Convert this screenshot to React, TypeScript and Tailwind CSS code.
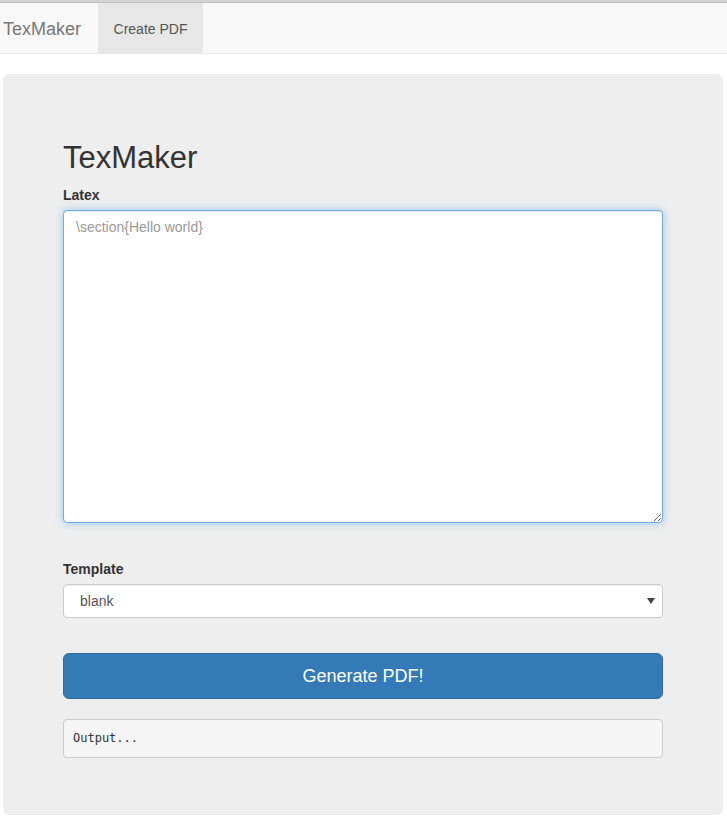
import React from "react";

export default function App() {
  const sans = { fontFamily: '"Liberation Sans", Arial, sans-serif' };
  return (
    <div className="min-h-[821px] bg-white text-[14px] text-[#333]" style={sans}>
      <div className="h-[3px] bg-[#d4d4d4] border-b border-[#bdbdbd]" />
      <nav className="flex h-[51px] items-stretch border-b border-[#e7e7e7] bg-[#f8f8f8]">
        <a className="flex items-center pl-[3px] pr-[17px] pt-[1px] text-[18px] leading-[20px] text-[#777]">TexMaker</a>
        <a className="flex items-center bg-[#e7e7e7] px-[15.5px] pt-[1px] text-[14px] leading-[20px] text-[#555]">Create PDF</a>
      </nav>
      <div className="ml-[3px] mt-[20px] w-[720px] rounded-[6px] bg-[#eeeeee] px-[60px] pt-[48px] pb-[47px]">
        <h1 className="mt-[19px] mb-[10px] text-[31px] leading-[1.1] font-normal text-[#333]">TexMaker</h1>
        <label className="mb-[5px] block text-[14px] font-bold leading-[20px]">Latex</label>
        <textarea
          className="block h-[313px] w-full resize-y rounded-[4px] border border-[#66afe9] bg-white px-[12px] py-[6px] text-[14px] leading-[20px] text-[#555] outline-none placeholder:text-[#999] shadow-[inset_0_1px_1px_rgba(0,0,0,0.075),0_0_8px_rgba(102,175,233,0.6)]"
          placeholder="\section{Hello world}"
          style={sans}
        />
        <label className="mt-[36px] mb-[5px] block text-[14px] font-bold leading-[20px]">Template</label>
        <div className="flex h-[34px] w-full items-center justify-between rounded-[4px] border border-[#ccc] bg-white pl-[16px] pr-[6px] text-[14px] text-[#555] shadow-[inset_0_1px_1px_rgba(0,0,0,0.075)]">
          <span>blank</span>
          <svg width="8" height="6" viewBox="0 0 8 6" className="mr-[1px]">
            <path d="M0 0 L8 0 L4 6 Z" fill="#444" />
          </svg>
        </div>
        <button className="mt-[35px] block h-[46px] w-full rounded-[6px] border border-[#2e6da4] bg-[#337ab7] text-[18px] leading-[24px] text-white" style={sans}>
          Generate PDF!
        </button>
        <pre
          className="mt-[20px] mb-[10px] rounded-[4px] border border-[#ccc] bg-[#f5f5f5] px-[9px] py-[9px] text-[12px] leading-[19px] text-[#333]"
          style={{ fontFamily: '"DejaVu Sans Mono", "Liberation Mono", monospace' }}
        >
          Output...
        </pre>
      </div>
    </div>
  );
}
